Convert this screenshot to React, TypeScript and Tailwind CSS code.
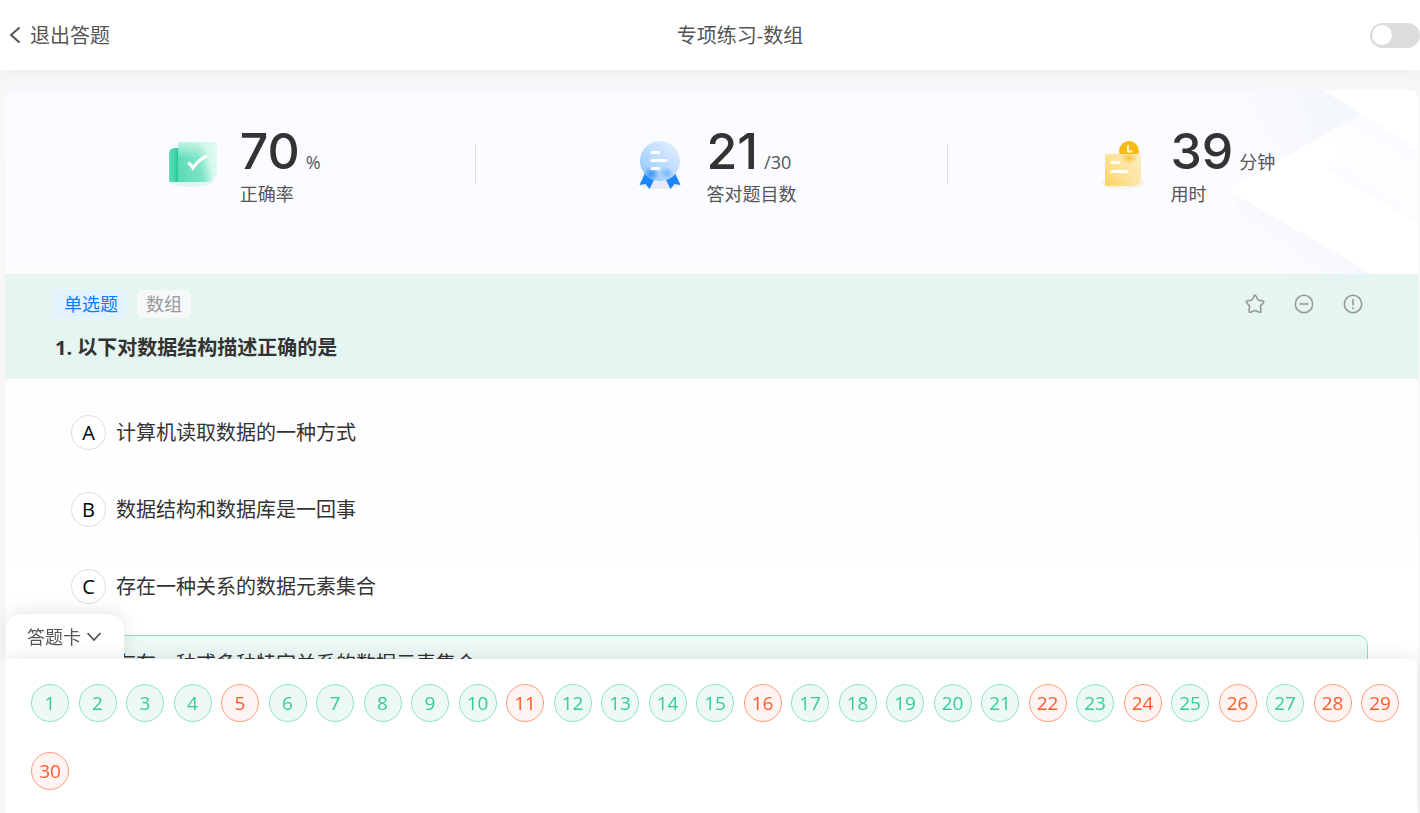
import { useState } from "react"
import type { ReactNode } from "react"
import { clsx } from "clsx"

const OPTIONS = [
  { key: "A", text: "计算机读取数据的一种方式" },
  { key: "B", text: "数据结构和数据库是一回事" },
  { key: "C", text: "存在一种关系的数据元素集合" },
  { key: "D", text: "存在一种或多种特定关系的数据元素集合" },
]

const TOTAL = 30
const WRONG = [5, 11, 16, 22, 24, 26, 28, 29, 30]

function AccuracyIcon() {
  return (
    <svg viewBox="0 0 60 60" className="size-[60px] shrink-0" aria-hidden="true">
      <defs>
        <linearGradient id="acc-back" x1="0" x2="1">
          <stop offset="0" stopColor="#5fdcb5" />
          <stop offset="0.5" stopColor="#45d3a8" />
          <stop offset="0.85" stopColor="#22c794" />
          <stop offset="1" stopColor="#3fd1a5" />
        </linearGradient>
        <linearGradient id="acc-front" x1="0" y1="0.6" x2="1" y2="0.4">
          <stop offset="0" stopColor="#5bdcb5" />
          <stop offset="0.55" stopColor="#7fe5c6" />
          <stop offset="0.82" stopColor="#d3f7ec" />
          <stop offset="1" stopColor="#e2faf3" />
        </linearGradient>
        <linearGradient id="acc-top" x1="0" y1="0" x2="0" y2="1">
          <stop offset="0" stopColor="#d9f8ee" stopOpacity="0.8" />
          <stop offset="0.4" stopColor="#d9f8ee" stopOpacity="0" />
        </linearGradient>
      </defs>
      <ellipse cx="31" cy="51" rx="22" ry="6" fill="#e3f3ef" />
      <path d="M9 24q0-6 6-6h5v34H11q-2 0-2-2z" fill="url(#acc-back)" />
      <path d="M18 14q0-2 2-2h34q3 0 3 3v24q0 13-12 13H18z" fill="url(#acc-front)" />
      <path d="M18 14q0-2 2-2h34q3 0 3 3v24q0 13-12 13H18z" fill="url(#acc-top)" />
      <path d="M28 33q3 1 5 5 6-9 14-12" fill="none" stroke="#fff" strokeWidth="3" />
    </svg>
  )
}

function MedalIcon() {
  return (
    <svg viewBox="0 0 60 60" className="size-[60px] shrink-0" aria-hidden="true">
      <defs>
        <linearGradient id="medal" x1="0.2" y1="0.8" x2="0.8" y2="0.1">
          <stop offset="0" stopColor="#9dccff" />
          <stop offset="0.45" stopColor="#bddcff" />
          <stop offset="1" stopColor="#dcecff" />
        </linearGradient>
        <radialGradient id="medal-glow">
          <stop offset="0" stopColor="#3291ff" />
          <stop offset="1" stopColor="#3291ff" stopOpacity="0" />
        </radialGradient>
      </defs>
      <ellipse cx="34" cy="54" rx="20" ry="5" fill="#e6ebf7" />
      <path d="M19 43 13.500 55l6-1 4 5L29 48z" fill="#1c85fb" />
      <path d="m49 43 5.500 12-6-1-4 5L39 48z" fill="#1c85fb" />
      <circle cx="34" cy="31" r="20" fill="url(#medal)" />
      <ellipse cx="25" cy="44" rx="8" ry="7" fill="url(#medal-glow)" />
      <ellipse cx="41" cy="43" rx="7" ry="6" fill="url(#medal-glow)" opacity="0.5" />
      <path d="M26 22.500h6.500M26 30.500h14M26 38.500h6.500" stroke="#fff" strokeWidth="3.200" strokeLinecap="round" />
    </svg>
  )
}

function ClockNoteIcon() {
  return (
    <svg viewBox="0 0 60 60" className="size-[60px] shrink-0" aria-hidden="true">
      <defs>
        <linearGradient id="note" x1="0" y1="0.9" x2="1" y2="0.2">
          <stop offset="0" stopColor="#fbd369" />
          <stop offset="0.5" stopColor="#fde39c" />
          <stop offset="1" stopColor="#fdecc0" />
        </linearGradient>
        <radialGradient id="note-glow">
          <stop offset="0" stopColor="#f8b91c" stopOpacity="0.8" />
          <stop offset="1" stopColor="#f8b91c" stopOpacity="0" />
        </radialGradient>
      </defs>
      <ellipse cx="33" cy="53" rx="22" ry="6" fill="#f5f2e9" />
      <circle cx="39" cy="21" r="10" fill="#f8b91c" />
      <path d="M38 15.500v6h4.500" fill="none" stroke="#fff3cf" strokeWidth="2" />
      <path d="M15 26q0-2 2-2h32q2 0 2 2v20q0 10-9 10H17q-2 0-2-2z" fill="url(#note)" />
      <ellipse cx="39" cy="28" rx="9" ry="6" fill="url(#note-glow)" />
      <path d="M22 32.500h6.500M22 41.500h15" stroke="#fff" strokeWidth="3.200" strokeLinecap="round" />
    </svg>
  )
}

function CardDecoration() {
  return (
    <svg
      viewBox="0 0 240 184"
      className="pointer-events-none absolute top-0 right-0 h-[184px] w-[240px]"
      aria-hidden="true"
    >
      <defs>
        <linearGradient id="deco-a" gradientUnits="userSpaceOnUse" x1="70" y1="60" x2="165" y2="20">
          <stop offset="0" stopColor="#f3f6fb" stopOpacity="0" />
          <stop offset="1" stopColor="#f3f6fb" />
        </linearGradient>
        <linearGradient id="deco-b" gradientUnits="userSpaceOnUse" x1="85" y1="170" x2="120" y2="125">
          <stop offset="0" stopColor="#f7f8fc" stopOpacity="0" />
          <stop offset="1" stopColor="#f6f7fb" />
        </linearGradient>
        <linearGradient id="deco-c" gradientUnits="userSpaceOnUse" x1="165" y1="66" x2="190" y2="25">
          <stop offset="0" stopColor="#fff" />
          <stop offset="1" stopColor="#fafbff" />
        </linearGradient>
        <linearGradient id="deco-d" gradientUnits="userSpaceOnUse" x1="205" y1="80" x2="185" y2="110">
          <stop offset="0" stopColor="#fafbff" stopOpacity="0.2" />
          <stop offset="1" stopColor="#fafbff" />
        </linearGradient>
      </defs>
      <path d="M30 0h115l37 24L56 98z" fill="url(#deco-a)" />
      <path d="m56 102 138 82H60z" fill="url(#deco-b)" />
      <path d="M145 0h95v60z" fill="#fff" />
      <path d="M182 24 56 96q-5 4 0 8l138 80h46V60z" fill="#fff" />
      <path d="M182 24 240 60v50l-76-46-36-9z" fill="url(#deco-c)" />
      <path d="m152 72 12-7 76 45v23l-88-51q-6-4 0-10z" fill="url(#deco-d)" />
    </svg>
  )
}

interface StatProps {
  icon: ReactNode
  value: string
  unit: string
  label: string
}

function Stat({ icon, value, unit, label }: StatProps) {
  return (
    <div className="flex flex-1 justify-center gap-5">
      <div className="pt-10">{icon}</div>
      <div className="pt-9 text-lg leading-7 text-[#555]">
        <p className="flex items-baseline gap-[6px]">
          <span className="font-[Inter,sans-serif] text-[50px] leading-[50px] font-medium text-[#333]">{value}</span>
          <span>{unit}</span>
        </p>
        <p className="mt-1">{label}</p>
      </div>
    </div>
  )
}

function Divider() {
  return <div className="mt-[55px] h-10 w-px shrink-0 bg-[#dcdee3]" />
}

function QuestionActions() {
  const buttons = [
    {
      label: "收藏",
      shape: (
        <path d="M9.200 1.800q.8-1.400 1.600 0l2 3.600q.3.500.9.700l4.300.9q1.300.4.500 1.500l-2.700 3.100q-.4.500-.3 1.100l.4 4.600q0 1.300-1.300.9l-4-1.400q-.6-.2-1.200 0l-4 1.400q-1.300.4-1.300-.9l.4-4.600q.1-.6-.3-1.100L1.500 8.500Q.7 7.400 2 7l4.300-.9q.6-.2.9-.7z" />
      ),
    },
    {
      label: "移除",
      shape: (
        <>
          <circle cx="10" cy="10" r="8.700" />
          <path d="M5.500 10h9" />
        </>
      ),
    },
    {
      label: "纠错",
      shape: (
        <>
          <circle cx="10" cy="10" r="8.700" />
          <path d="M10 5v6.500M10 13.500v1.700" />
        </>
      ),
    },
  ]

  return (
    <div className="flex items-center gap-[29px]">
      {buttons.map((item) => (
        <button key={item.label} type="button" aria-label={item.label} className="text-[#999]">
          <svg
            viewBox="0 0 20 20"
            className="size-5"
            fill="none"
            stroke="currentColor"
            strokeWidth="1.6"
            strokeLinejoin="round"
          >
            {item.shape}
          </svg>
        </button>
      ))}
    </div>
  )
}

export default function App() {
  const [answer, setAnswer] = useState("D")
  const [cardOpen, setCardOpen] = useState(true)

  return (
    <div className="flex min-h-screen flex-col bg-[#f7f7f7] font-['Open_Sans','Noto_Sans_CJK_SC',sans-serif] text-[#333]">
      <header className="relative flex h-[70px] items-center justify-between bg-white text-xl text-[#555] shadow-[0_0_20px_rgba(0,0,0,0.06)]">
        <a href="#exit" className="flex items-center gap-2 pt-[2px] pl-2">
          <svg viewBox="0 0 14 18" className="h-[18px] w-[14px]" fill="none" stroke="currentColor" strokeWidth="2">
            <path d="M11.500 .5 3 8l8.500 7.500" />
          </svg>
          退出答题
        </a>
        <h1 className="pt-[2px]">专项练习-数组</h1>
        <input
          type="checkbox"
          role="switch"
          aria-label="自动下一题"
          className="h-[25px] w-[50px] appearance-none rounded-full bg-[#dcdcdc] p-[2px] before:block before:size-5 before:rounded-full before:bg-white checked:bg-[#36cb9b] checked:before:ml-auto"
        />
      </header>

      <main className="mt-5 mr-[2px] ml-[5px] flex-1 rounded-t-lg bg-linear-to-b from-[#fafbff] to-white to-70%">
        <section className="relative flex h-[184px] overflow-hidden rounded-t-lg">
          <CardDecoration />
          <div className="relative flex flex-1">
            <Stat icon={<AccuracyIcon />} value="70" unit="%" label="正确率" />
            <Divider />
            <Stat icon={<MedalIcon />} value="21" unit="/30" label="答对题目数" />
            <Divider />
            <Stat icon={<ClockNoteIcon />} value="39" unit="分钟" label="用时" />
          </div>
        </section>

        <section className="bg-[#e5f5f1] px-[50px] pt-4 pb-[15px]">
          <div className="flex items-center justify-between pr-[5px]">
            <div className="flex gap-[10px] text-lg leading-7">
              <span className="rounded-md bg-[#e3f2ff] px-[9px] text-[#0a7cff]">单选题</span>
              <span className="rounded-md bg-[#f6f8fa] px-[9px] text-[#999]">数组</span>
            </div>
            <QuestionActions />
          </div>
          <h2 className="mt-[14px] text-xl leading-8 font-bold">1. 以下对数据结构描述正确的是</h2>
        </section>

        <div role="radiogroup" aria-label="选项" className="flex flex-col gap-5 px-[50px] pt-[25px]">
          {OPTIONS.map((option) => (
            <label
              key={option.key}
              className={clsx(
                "relative flex h-[57px] cursor-pointer items-center gap-[10px] rounded-[10px] border px-[15px] text-xl leading-8",
                answer === option.key ? "border-[#8fe2c8] bg-[#edf9f6]" : "border-transparent"
              )}
            >
              <input
                type="radio"
                name="answer"
                className="absolute inset-0 appearance-none"
                checked={answer === option.key}
                onChange={() => setAnswer(option.key)}
              />
              <span className="flex size-[35px] items-center justify-center rounded-full border border-[#dcdee3] bg-white text-black">
                {option.key}
              </span>
              <span className="pt-px">{option.text}</span>
            </label>
          ))}
        </div>
      </main>

      <footer className="fixed right-[3px] bottom-0 left-[6px]">
        <button
          type="button"
          aria-expanded={cardOpen}
          className="relative flex h-[45px] w-[118px] items-center gap-[6px] rounded-t-2xl bg-white pl-[21px] text-lg text-[#555] shadow-[0_-2px_20px_rgba(0,0,0,0.1)]"
          onClick={() => setCardOpen(!cardOpen)}
        >
          答题卡
          <svg viewBox="0 0 16 10" className="h-[10px] w-4" fill="none" stroke="currentColor" strokeWidth="1.800">
            <path d="m.5 1 6.500 7L13.500 1" />
          </svg>
        </button>
        {cardOpen && (
          <div className="relative grid grid-cols-[repeat(auto-fill,38px)] justify-between gap-x-[9px] gap-y-[30px] rounded-tr-md bg-white pt-[25px] pr-[18px] pb-[23px] pl-[25px] shadow-[0_0_20px_rgba(0,0,0,0.1)] [clip-path:inset(-30px_-30px_0_0)]">
            {Array.from({ length: TOTAL }, (_, i) => i + 1).map((n) => (
              <button
                key={n}
                type="button"
                className={clsx(
                  "flex size-[38px] items-center justify-center rounded-full border text-[19px]",
                  WRONG.includes(n)
                    ? "border-[#ff9c7c] bg-[#fff4f1] text-[#ff5b29]"
                    : "border-[#8fe2c8] bg-[#edf9f6] text-[#36cb9b]"
                )}
              >
                {n}
              </button>
            ))}
          </div>
        )}
      </footer>
    </div>
  )
}
